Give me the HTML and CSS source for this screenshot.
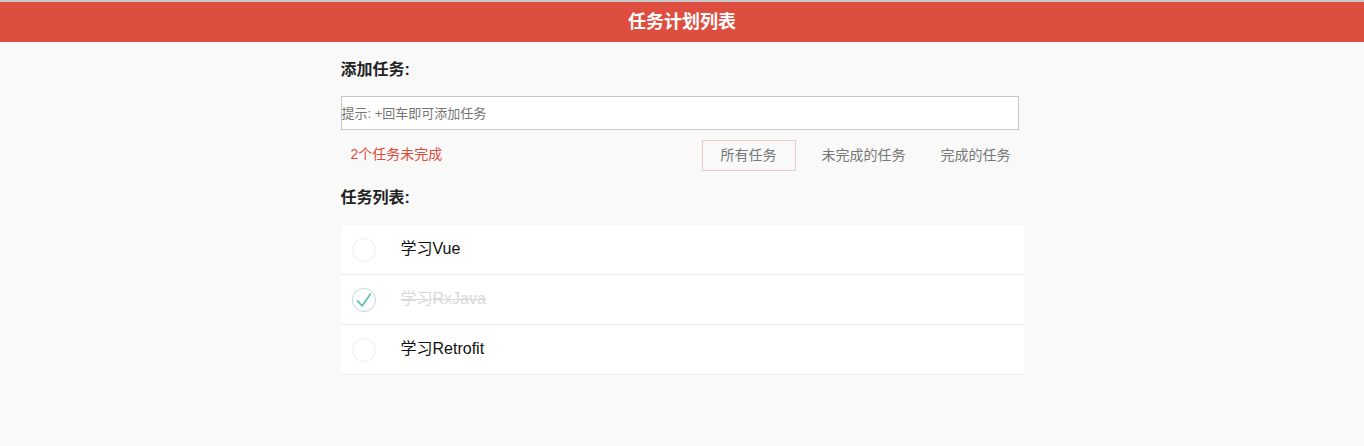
FILE: index.html
```html
<!DOCTYPE html>
<html lang="zh-CN">
<head>
<meta charset="utf-8">
<title>任务计划列表</title>
<link rel="stylesheet" href="styles.css">
</head>
<body>
<header class="page-header">任务计划列表</header>
<main class="main">
  <h3 class="section-title">添加任务:</h3>
  <input class="task-input" type="text" placeholder="提示: +回车即可添加任务">
  <div class="status-row">
    <span class="remaining">2个任务未完成</span>
    <nav class="filters">
      <a class="filter active">所有任务</a>
      <a class="filter">未完成的任务</a>
      <a class="filter">完成的任务</a>
    </nav>
  </div>
  <h3 class="section-title list-title">任务列表:</h3>
  <ul class="todo-list">
    <li class="todo">
      <span class="check"></span>
      <span class="label">学习Vue</span>
    </li>
    <li class="todo done">
      <span class="check checked">
        <svg viewBox="0 0 24 24" width="24" height="24"><path d="M5 13 L10 18.5 L19 5.5" fill="none" stroke="#5dc2af" stroke-width="1.9" stroke-linecap="round" stroke-linejoin="round"/></svg>
      </span>
      <span class="label">学习RxJava</span>
    </li>
    <li class="todo">
      <span class="check"></span>
      <span class="label">学习Retrofit</span>
    </li>
  </ul>
</main>
</body>
</html>
```

FILE: styles.css
```css
* { box-sizing: border-box; }

html, body {
  margin: 0;
  padding: 0;
}

body {
  background: #f9f9f9;
  border-top: 2px solid #c9c9c9;
  font-family: "Liberation Sans", "Noto Sans CJK SC", sans-serif;
  color: #111;
  min-height: 446px;
}

.page-header {
  height: 40px;
  line-height: 40px;
  background: #dd4e41;
  color: #fff;
  text-align: center;
  font-size: 18px;
  font-weight: bold;
}

.main {
  width: 683px;
  margin: 0 auto;
  padding-top: 16px;
  display: flex;
  flex-direction: column;
}

.section-title {
  margin: 0;
  font-size: 16px;
  line-height: 24px;
  font-weight: bold;
  color: #222;
}

.task-input {
  margin-top: 14px;
  width: 678px;
  height: 34px;
  border: 1px solid #c8c8c8;
  padding: 0;
  background: #fff;
  font-family: inherit;
  font-size: 13px;
  outline: none;
}

.task-input::placeholder {
  color: #757575;
}

.status-row {
  margin-top: 10px;
  height: 31px;
  display: flex;
  align-items: center;
  justify-content: space-between;
}

.remaining {
  padding-left: 10px;
  padding-bottom: 3px;
  font-size: 14px;
  line-height: 20px;
  color: #dd4b39;
}

.filters {
  display: flex;
  gap: 17px;
  margin-right: 4px;
}

.filter {
  height: 31px;
  line-height: 29px;
  padding: 0 8px;
  border: 1px solid transparent;
  font-size: 14px;
  color: #777;
  cursor: pointer;
}

.filter.active {
  padding: 0 18px;
  border-color: #efcaca;
}

.list-title {
  margin-top: 15px;
}

.todo-list {
  list-style: none;
  margin: 15px 0 0;
  padding: 0;
  background: #fff;
}

.todo {
  height: 50px;
  border-bottom: 1px solid #ededed;
  display: flex;
  align-items: center;
  padding-left: 11px;
}

.check {
  width: 24px;
  height: 24px;
  border: 1px solid #ededed;
  border-radius: 50%;
  display: flex;
  align-items: center;
  justify-content: center;
  flex: none;
}

.check.checked {
  border-color: #bddad5;
}

.check svg {
  display: block;
}

.label {
  margin-left: 25px;
  padding-bottom: 1px;
  font-size: 16px;
  line-height: 22px;
  color: #111;
}

.todo.done .label {
  color: #d9d9d9;
  text-decoration: line-through;
}
```
